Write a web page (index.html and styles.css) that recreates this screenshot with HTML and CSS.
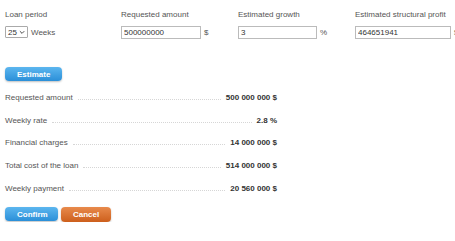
FILE: index.html
```html
<!DOCTYPE html>
<html lang="en">
<head>
    <meta charset="UTF-8">
    <title>Loan Estimate</title>
    <link rel="stylesheet" href="styles.css">
</head>
<body>

<div class="loan-form">

    <div class="fields">
        <div class="field">
            <label>Loan period</label>
            <div class="field-input">
                <div class="period-select">
                    <span>25</span>
                    <svg width="7" height="5" viewBox="0 0 7 5">
                        <path d="M1 1 L3.5 3.5 L6 1" fill="none" stroke="#444" stroke-width="1.1"/>
                    </svg>
                </div>
                <span class="unit">Weeks</span>
            </div>
        </div>
        <div class="field">
            <label>Requested amount</label>
            <div class="field-input">
                <input type="text" class="amount-input" value="500000000">
                <span class="unit">$</span>
            </div>
        </div>
        <div class="field">
            <label>Estimated growth</label>
            <div class="field-input">
                <input type="text" class="growth-input" value="3">
                <span class="unit">%</span>
            </div>
        </div>
        <div class="field">
            <label>Estimated structural profit</label>
            <div class="field-input">
                <input type="text" class="profit-input" value="464651941">
                <span class="unit">$</span>
            </div>
        </div>
    </div>

    <button class="btn btn-blue estimate-btn">Estimate</button>

    <div class="results">
        <div class="result-row">
            <span class="result-label">Requested amount</span>
            <span class="dots"></span>
            <span class="result-value">500 000 000 $</span>
        </div>
        <div class="result-row">
            <span class="result-label">Weekly rate</span>
            <span class="dots"></span>
            <span class="result-value">2.8 %</span>
        </div>
        <div class="result-row">
            <span class="result-label">Financial charges</span>
            <span class="dots"></span>
            <span class="result-value">14 000 000 $</span>
        </div>
        <div class="result-row">
            <span class="result-label">Total cost of the loan</span>
            <span class="dots"></span>
            <span class="result-value">514 000 000 $</span>
        </div>
        <div class="result-row">
            <span class="result-label">Weekly payment</span>
            <span class="dots"></span>
            <span class="result-value">20 560 000 $</span>
        </div>
    </div>

    <div class="actions">
        <button class="btn btn-blue">Confirm</button>
        <button class="btn btn-orange">Cancel</button>
    </div>
</div>

</body>
</html>
```

FILE: styles.css
```css
* {
    box-sizing: border-box;
}

body {
    font-family: 'Liberation Sans', Arial, sans-serif;
    font-size: 8px;
    margin: 0;
    padding: 0 5px;
    background-color: #fff;
    color: #555;
    overflow: hidden;
}

.fields {
    display: grid;
    grid-template-columns: 116px 117px 117px 117px;
    padding-top: 10px;
}

.field label {
    display: block;
    height: 15px;
    line-height: 10px;
}

.field-input {
    display: flex;
    align-items: center;
    gap: 3px;
    height: 14px;
}

input[type="text"] {
    height: 13px;
    padding: 0 2px;
    border: 1px solid #bbb;
    font-family: inherit;
    font-size: 8px;
    color: #333;
}

.amount-input {
    width: 80px;
}

.growth-input {
    width: 79px;
}

.profit-input {
    width: 96px;
}

.period-select {
    display: flex;
    align-items: center;
    gap: 2px;
    height: 12px;
    width: 23px;
    padding: 0 2px;
    border: 1px solid #aaa;
    border-radius: 1px;
    color: #333;
}

.btn {
    height: 14px;
    padding: 0 12px;
    border: none;
    border-radius: 4px;
    color: #fff;
    font-family: inherit;
    font-weight: bold;
    font-size: 8px;
    cursor: pointer;
    box-shadow: 0 1px 2px rgba(0,0,0,0.25);
}

.btn-blue {
    background: linear-gradient(#5cb6ef, #2b8fd8);
}

.btn-orange {
    background: linear-gradient(#e88a4c, #cd5f1c);
}

.estimate-btn {
    margin-top: 28px;
    width: 57px;
}

.results {
    margin-top: 6px;
    width: 272px;
}

.result-row {
    display: flex;
    align-items: baseline;
    height: 22.7px;
    line-height: 22.7px;
}

.dots {
    flex: 1;
    margin: 0 5px;
    border-bottom: 1px dotted #d6d6d6;
}

.result-value {
    font-weight: bold;
    color: #333;
}

.actions {
    display: flex;
    gap: 3px;
    margin-top: 7px;
}

.actions .btn-blue {
    width: 53px;
}

.actions .btn-orange {
    width: 50px;
    height: 15px;
}
```
